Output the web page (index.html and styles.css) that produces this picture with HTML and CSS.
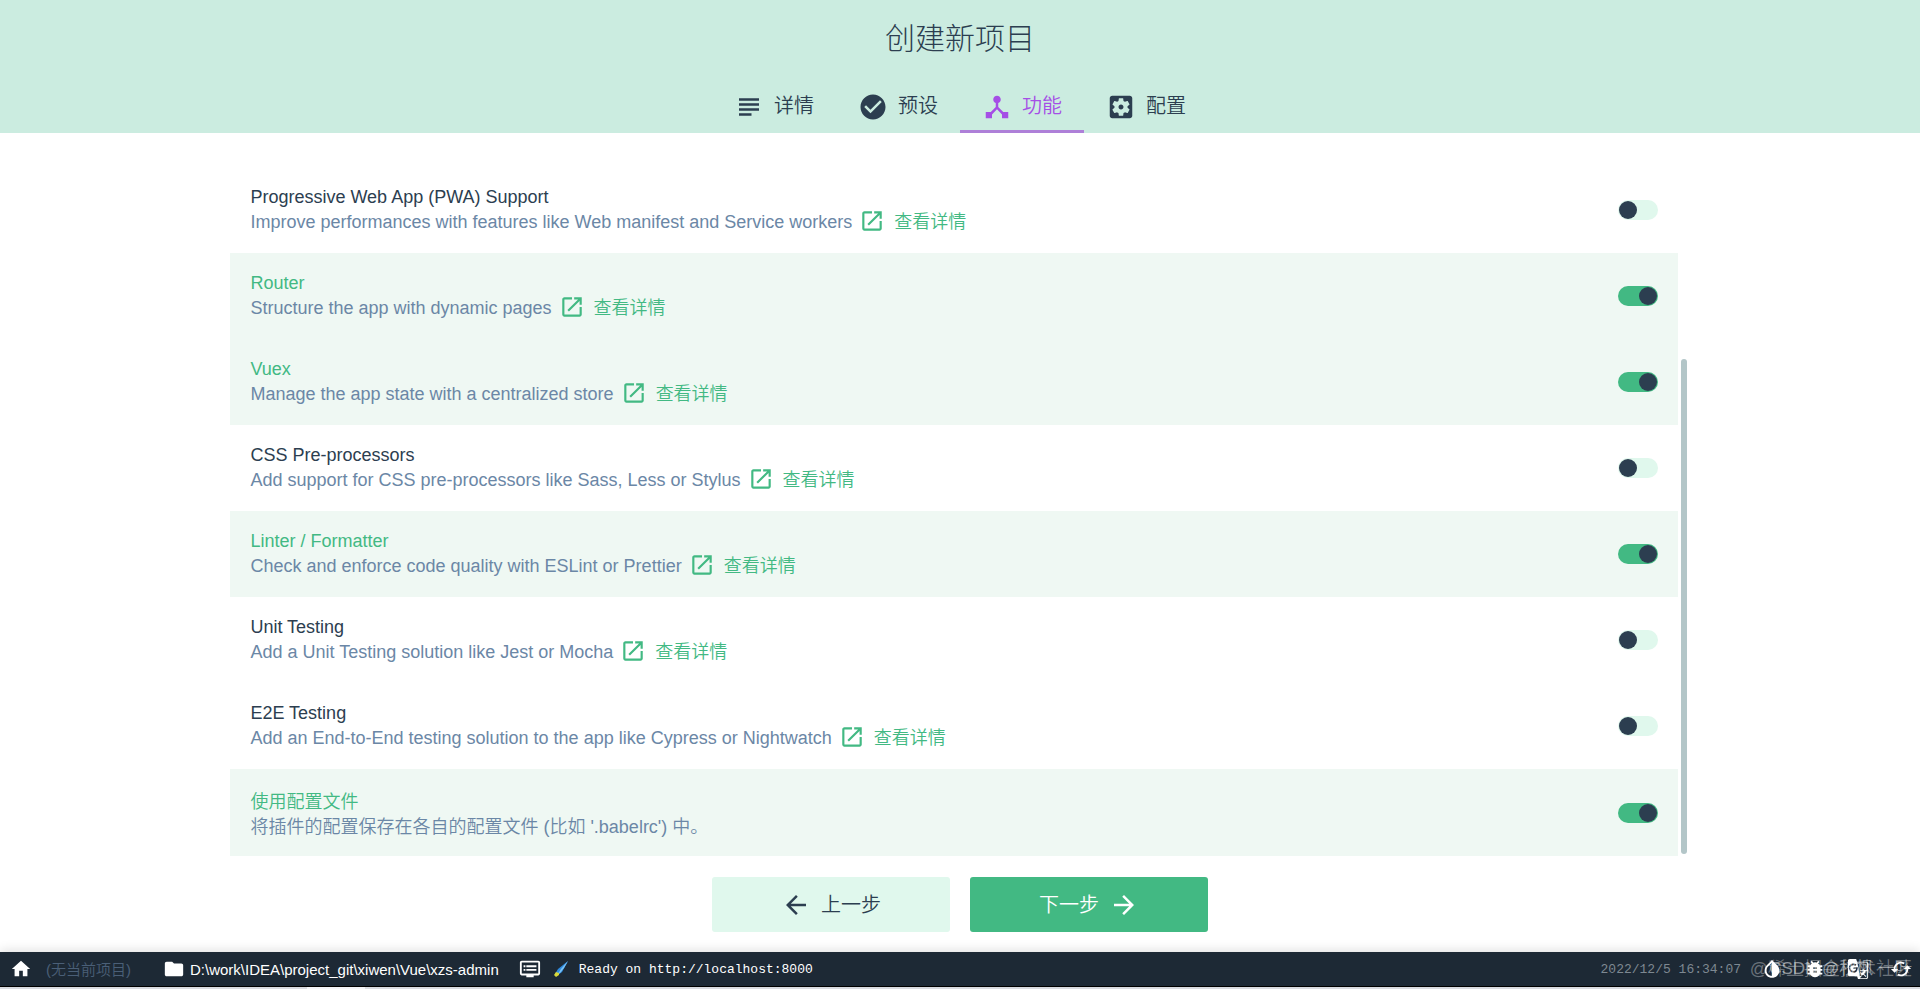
FILE: index.html
```html
<!DOCTYPE html>
<html lang="zh-CN">
<head>
<meta charset="utf-8">
<title>创建新项目</title>
<link rel="stylesheet" href="styles.css">
</head>
<body>
<svg class="sprite" aria-hidden="true">
  <symbol id="i-subject" viewBox="0 0 24 24"><path d="M14 17H4v2h10v-2zm6-8H4v2h16V9zM4 15h16v-2H4v2zM4 5v2h16V5H4z"/></symbol>
  <symbol id="i-check" viewBox="0 0 24 24"><path d="M12 2C6.480 2 2 6.480 2 12s4.480 10 10 10 10-4.480 10-10S17.520 2 12 2zm-2 15l-5-5 1.410-1.410L10 14.170l7.590-7.590L19 8l-9 9z"/></symbol>
  <symbol id="i-hub" viewBox="0 0 24 24"><path d="M17 16l-4-4V8.820C14.160 8.400 15 7.300 15 6c0-1.660-1.340-3-3-3S9 4.340 9 6c0 1.300.84 2.400 2 2.820V12l-4 4H3v5h5v-3.050l4-4.200 4 4.200V21h5v-5h-4z"/></symbol>
  <symbol id="i-gear" viewBox="0 0 24 24"><path d="M12 10c-1.100 0-2 .9-2 2s.9 2 2 2 2-.9 2-2-.9-2-2-2zm7-7H5c-1.110 0-2 .9-2 2v14c0 1.100.89 2 2 2h14c1.110 0 2-.9 2-2V5c0-1.100-.89-2-2-2zm-1.750 9c0 .23-.02.46-.05.68l1.480 1.160c.13.11.17.3.08.45l-1.400 2.420c-.09.15-.27.21-.43.15l-1.740-.7c-.36.28-.76.51-1.180.69l-.26 1.850c-.03.17-.18.3-.35.3h-2.800c-.17 0-.32-.13-.35-.29l-.26-1.850c-.43-.18-.82-.41-1.180-.69l-1.740.7c-.16.06-.34 0-.43-.15l-1.400-2.420c-.09-.15-.05-.34.08-.45l1.480-1.160c-.03-.23-.05-.46-.05-.69s.02-.46.05-.68l-1.480-1.160c-.13-.11-.17-.3-.08-.45l1.400-2.420c.09-.15.27-.21.43-.15l1.740.7c.36-.28.76-.51 1.180-.69l.26-1.850c.03-.17.18-.3.35-.3h2.800c.17 0 .32.13.35.29l.26 1.850c.43.18.82.41 1.180.69l1.740-.7c.16-.06.34 0 .43.15l1.400 2.420c.09.15.05.34-.08.45l-1.480 1.160c.03.23.05.46.05.69z"/></symbol>
  <symbol id="i-open" viewBox="0 0 24 24"><path d="M19 19H5V5h7V3H5c-1.110 0-2 .9-2 2v14c0 1.100.89 2 2 2h14c1.100 0 2-.9 2-2v-7h-2v7zM14 3v2h3.590l-9.830 9.830 1.410 1.410L19 6.410V10h2V3h-7z"/></symbol>
  <symbol id="i-back" viewBox="0 0 24 24"><path d="M20 11H7.830l5.590-5.590L12 4l-8 8 8 8 1.410-1.410L7.830 13H20v-2z"/></symbol>
  <symbol id="i-forward" viewBox="0 0 24 24"><path d="M12 4l-1.410 1.410L16.170 11H4v2h12.170l-5.580 5.590L12 20l8-8z"/></symbol>
  <symbol id="i-home" viewBox="0 0 24 24"><path d="M10 20v-6h4v6h5v-8h3L12 3 2 12h3v8z"/></symbol>
  <symbol id="i-folder" viewBox="0 0 24 24"><path d="M10 4H4c-1.100 0-1.990.9-1.990 2L2 18c0 1.100.9 2 2 2h16c1.100 0 2-.9 2-2V8c0-1.100-.9-2-2-2h-8l-2-2z"/></symbol>
  <symbol id="i-dvr" viewBox="0 0 24 24"><path d="M21 3H3c-1.100 0-2 .9-2 2v12c0 1.100.9 2 2 2h5v2h8v-2h5c1.100 0 1.990-.9 1.990-2L23 5c0-1.100-.9-2-2-2zm0 14H3V5h18v12zm-2-9H8v2h11V8zm0 4H8v2h11v-2zM7 8H5v2h2V8zm0 4H5v2h2v-2z"/></symbol>
  <symbol id="i-drop" viewBox="0 0 24 24"><path d="M17.660 7.930L12 2.270 6.340 7.930c-3.120 3.120-3.120 8.190 0 11.310C7.900 20.800 9.950 21.580 12 21.580s4.100-.78 5.660-2.340c3.120-3.120 3.120-8.190 0-11.310zM12 19.590c-1.600 0-3.110-.62-4.240-1.760C6.620 16.690 6 15.190 6 13.590s.62-3.110 1.760-4.240L12 5.100v14.490z"/></symbol>
  <symbol id="i-bug" viewBox="0 0 24 24"><path d="M20 8h-2.810c-.45-.78-1.070-1.450-1.820-1.960L17 4.410 15.590 3l-2.170 2.170C12.960 5.060 12.490 5 12 5s-.96.06-1.410.17L8.410 3 7 4.410l1.620 1.630C7.880 6.550 7.260 7.220 6.810 8H4v2h2.090c-.05.33-.09.66-.09 1v1H4v2h2v1c0 .34.04.67.09 1H4v2h2.810c1.040 1.790 2.970 3 5.190 3s4.150-1.210 5.190-3H20v-2h-2.090c.05-.33.09-.66.09-1v-1h2v-2h-2v-1c0-.34-.04-.67-.09-1H20V8zm-6 8h-4v-2h4v2zm0-4h-4v-2h4v2z"/></symbol>
  <symbol id="i-translate" viewBox="0 0 24 24"><path d="M21 4H11l-1-3H3c-1.100 0-2 .9-2 2v15c0 1.100.9 2 2 2h8l1 3h9c1.100 0 2-.9 2-2V6c0-1.100-.9-2-2-2zM7 16c-2.760 0-5-2.240-5-5s2.240-5 5-5c1.350 0 2.480.5 3.350 1.300L9.030 8.570c-.38-.36-1.040-.78-2.030-.78-1.740 0-3.150 1.440-3.150 3.210S5.260 14.210 7 14.210c2.010 0 2.840-1.440 2.920-2.410H7v-1.710h4.680c.07.31.12.61.12 1.020C11.800 13.970 9.890 16 7 16zm15 5c0 .55-.45 1-1 1h-7l2-2-1.500-5 1.600 1.600 2.400-2.600h-4l-.5-1h3v-1h1v1h4v1h-1.500c-.4 1.300-1 2.500-1.900 3.500l2.500 2.500-.7.700-2.500-2.500L14 20 11.300 5H21c.55 0 1 .45 1 1v15z"/></symbol>
  <symbol id="i-refresh" viewBox="0 0 24 24"><path d="M19 8l-4 4h3c0 3.310-2.690 6-6 6-1.010 0-1.970-.25-2.800-.7l-1.460 1.460C8.970 19.540 10.430 20 12 20c4.420 0 8-3.580 8-8h3l-4-4zM6 12c0-3.310 2.690-6 6-6 1.010 0 1.970.25 2.800.7l1.460-1.460C15.030 4.460 13.570 4 12 4c-4.420 0-8 3.580-8 8H1l4 4 4-4H6z"/></symbol>
</svg>

<div class="app">
  <header class="head">
    <h1 class="title">创建新项目</h1>
    <nav class="tabs">
      <button class="tab" type="button"><svg class="icon"><use href="#i-subject"/></svg>详情</button>
      <button class="tab" type="button"><svg class="icon"><use href="#i-check"/></svg>预设</button>
      <button class="tab tab-active" type="button"><svg class="icon"><use href="#i-hub"/></svg>功能</button>
      <button class="tab" type="button"><svg class="icon"><use href="#i-gear"/></svg>配置</button>
    </nav>
  </header>

  <main class="content">
    <div class="scroller">
      <div class="list">
        <div class="row">
          <div class="info">
            <label class="name" for="f-pwa">Progressive Web App (PWA) Support</label>
            <div class="desc">Improve performances with features like Web manifest and Service workers<a class="more" href="#"><svg class="icon-sm"><use href="#i-open"/></svg>查看详情</a></div>
          </div>
          <input class="switch" type="checkbox" id="f-pwa">
        </div>
        <div class="row row-on">
          <div class="info">
            <label class="name" for="f-router">Router</label>
            <div class="desc">Structure the app with dynamic pages<a class="more" href="#"><svg class="icon-sm"><use href="#i-open"/></svg>查看详情</a></div>
          </div>
          <input class="switch" type="checkbox" id="f-router" checked>
        </div>
        <div class="row row-on">
          <div class="info">
            <label class="name" for="f-vuex">Vuex</label>
            <div class="desc">Manage the app state with a centralized store<a class="more" href="#"><svg class="icon-sm"><use href="#i-open"/></svg>查看详情</a></div>
          </div>
          <input class="switch" type="checkbox" id="f-vuex" checked>
        </div>
        <div class="row">
          <div class="info">
            <label class="name" for="f-css">CSS Pre-processors</label>
            <div class="desc">Add support for CSS pre-processors like Sass, Less or Stylus<a class="more" href="#"><svg class="icon-sm"><use href="#i-open"/></svg>查看详情</a></div>
          </div>
          <input class="switch" type="checkbox" id="f-css">
        </div>
        <div class="row row-on">
          <div class="info">
            <label class="name" for="f-lint">Linter / Formatter</label>
            <div class="desc">Check and enforce code quality with ESLint or Prettier<a class="more" href="#"><svg class="icon-sm"><use href="#i-open"/></svg>查看详情</a></div>
          </div>
          <input class="switch" type="checkbox" id="f-lint" checked>
        </div>
        <div class="row">
          <div class="info">
            <label class="name" for="f-unit">Unit Testing</label>
            <div class="desc">Add a Unit Testing solution like Jest or Mocha<a class="more" href="#"><svg class="icon-sm"><use href="#i-open"/></svg>查看详情</a></div>
          </div>
          <input class="switch" type="checkbox" id="f-unit">
        </div>
        <div class="row">
          <div class="info">
            <label class="name" for="f-e2e">E2E Testing</label>
            <div class="desc">Add an End-to-End testing solution to the app like Cypress or Nightwatch<a class="more" href="#"><svg class="icon-sm"><use href="#i-open"/></svg>查看详情</a></div>
          </div>
          <input class="switch" type="checkbox" id="f-e2e">
        </div>
        <div class="row row-on row-last">
          <div class="info info-zh">
            <label class="name" for="f-conf">使用配置文件</label>
            <div class="desc">将插件的配置保存在各自的配置文件 (比如 '.babelrc') 中。</div>
          </div>
          <input class="switch" type="checkbox" id="f-conf" checked>
        </div>
      </div>
      <div class="track"><div class="thumb"></div></div>
    </div>
    <div class="actions">
      <button class="btn" type="button"><svg class="icon"><use href="#i-back"/></svg><span class="btn-text">上一步</span></button>
      <button class="btn btn-primary" type="button"><span class="btn-text">下一步</span><svg class="icon"><use href="#i-forward"/></svg></button>
    </div>
  </main>

  <footer class="status">
    <a class="home" href="#" aria-label="Home"><svg class="icon-md"><use href="#i-home"/></svg></a>
    <span class="project">(无当前项目)</span>
    <span class="path"><svg class="icon-md"><use href="#i-folder"/></svg>D:\work\IDEA\project_git\xiwen\Vue\xzs-admin</span>
    <span class="log"><svg class="icon-md"><use href="#i-dvr"/></svg>
      <svg class="comet" viewBox="0 0 16 18"><path d="M15 1L5 9l-3 5 3 1 4-3z" fill="#2f8be0"/><path d="M15 1L8 9l-3 5 2-1 4-5z" fill="#7cc4f5"/><path d="M3 12l3 1 0 2-3 2-2-2z" fill="#d8d83a"/></svg>
      Ready on http://localhost:8000</span>
    <time class="time">2022/12/5 16:34:07</time>
    <span class="tools">
      <svg class="icon-md"><use href="#i-drop"/></svg>
      <svg class="icon-md"><use href="#i-bug"/></svg>
      <svg class="icon-md"><use href="#i-translate"/></svg>
      <svg class="icon-md"><use href="#i-refresh"/></svg>
      <span class="mark mark-a">@稀土掘金技术社区</span>
      <span class="mark mark-b">CSDN @秋枫 一叶</span>
    </span>
  </footer>
  <div class="edge"></div>
</div>
</body>
</html>
```
FILE: styles.css
```css
* { box-sizing: border-box; }
body {
  margin: 0;
  color: #2c3e50;
  background: #fff;
  font: 18px/25px "Liberation Sans", "Noto Sans CJK SC", sans-serif;
  font-weight: 350;
}
button { font: inherit; color: inherit; border: 0; background: none; cursor: pointer; }
a { color: inherit; text-decoration: none; }
svg { fill: currentColor; flex: none; }
.sprite { display: none; }
.icon { width: 30px; height: 30px; }
.icon-md { width: 22px; height: 22px; }
.icon-sm { width: 26px; height: 26px; margin-bottom: 4px; }

.app { display: flex; flex-direction: column; min-height: 100vh; }

.head { background: #cbece0; display: flex; flex-direction: column; align-items: center; }
.title { margin: 0; padding-top: 18px; font-size: 30px; line-height: 42px; font-weight: 300; }
.tabs { display: flex; margin-top: 20px; }
.tab {
  display: flex; align-items: center; justify-content: center; gap: 10px;
  height: 53px; padding: 3px 22px 0; font-size: 20px;
  border-bottom: 3px solid transparent;
}
.tab-active { color: #a54ee6; border-bottom-color: #ae80d8; }

.content { flex: 1; display: flex; flex-direction: column; padding-top: 34px; }
.scroller { display: flex; width: 76%; margin: 0 auto; }
.list { flex: 1; }
.row { display: flex; align-items: center; justify-content: space-between; height: 86px; padding: 0 20px; }
.row-last { height: 87px; }
.row-on { background: #eff8f3; }
.info { display: flex; flex-direction: column; align-items: flex-start; }
.info-zh { padding-top: 4px; }
.row-on .name { color: #42b983; }
.desc { display: flex; align-items: center; height: 25px; color: #6b87a6; }
.more { display: flex; align-items: center; gap: 9px; margin-left: 7px; color: #42b983; }

.switch {
  appearance: none; margin: 0; width: 40px; height: 20px; padding: 1px;
  border-radius: 10px; background: #e0f8ed; display: flex; flex: none;
}
.switch::before { content: ""; width: 18px; height: 18px; border-radius: 50%; background: #2c3e50; }
.switch:checked { background: #42b983; justify-content: flex-end; }

.track { display: flex; flex-direction: column; justify-content: flex-end; width: 12px; padding: 0 3px 2px; }
.thumb { height: 72%; border-radius: 3px; background: #b3c6c8; }

.actions { display: flex; justify-content: center; gap: 20px; padding: 21px 0 20px; }
.btn {
  display: flex; align-items: center; justify-content: center; gap: 10px;
  width: 238px; height: 55px; border-radius: 3px; background: #e0f8ed; font-size: 20px;
}
.btn-text { padding-top: 2px; }
.btn-primary { background: #42b983; color: #fff; }

.status {
  display: flex; align-items: center; height: 34px; padding: 0 8px 0 10px;
  background: #1d2935; color: #fff; font-size: 15px; box-shadow: 0 -2px 10px rgba(0, 0, 0, .12);
}
.home { display: flex; }
.project { margin-left: 14px; color: #4a5f77; }
.path { display: flex; align-items: center; gap: 5px; margin-left: 32px; }
.log { display: flex; align-items: center; margin-left: 20px; font-family: "Liberation Mono", monospace; font-size: 13px; }
.comet { width: 16px; height: 18px; margin: 0 10px 0 12px; }
.time { margin-left: auto; color: #7d8891; font-family: "Liberation Mono", monospace; font-size: 13px; }
.tools { position: relative; display: flex; gap: 21px; margin-left: 20px; }
.mark { position: absolute; top: 0; right: 0; white-space: nowrap; line-height: 22px; }
.mark-a { font-size: 18px; color: rgba(255, 255, 255, .35); }
.mark-b { font-size: 17px; color: rgba(255, 255, 255, .5); }
.edge { height: 3px; border-top: 1px solid #000; background: linear-gradient(90deg, #d9dbe0 16%, #f4f5f8 16%, #f4f5f8 19%, #d9dbe0 19%); }
```
